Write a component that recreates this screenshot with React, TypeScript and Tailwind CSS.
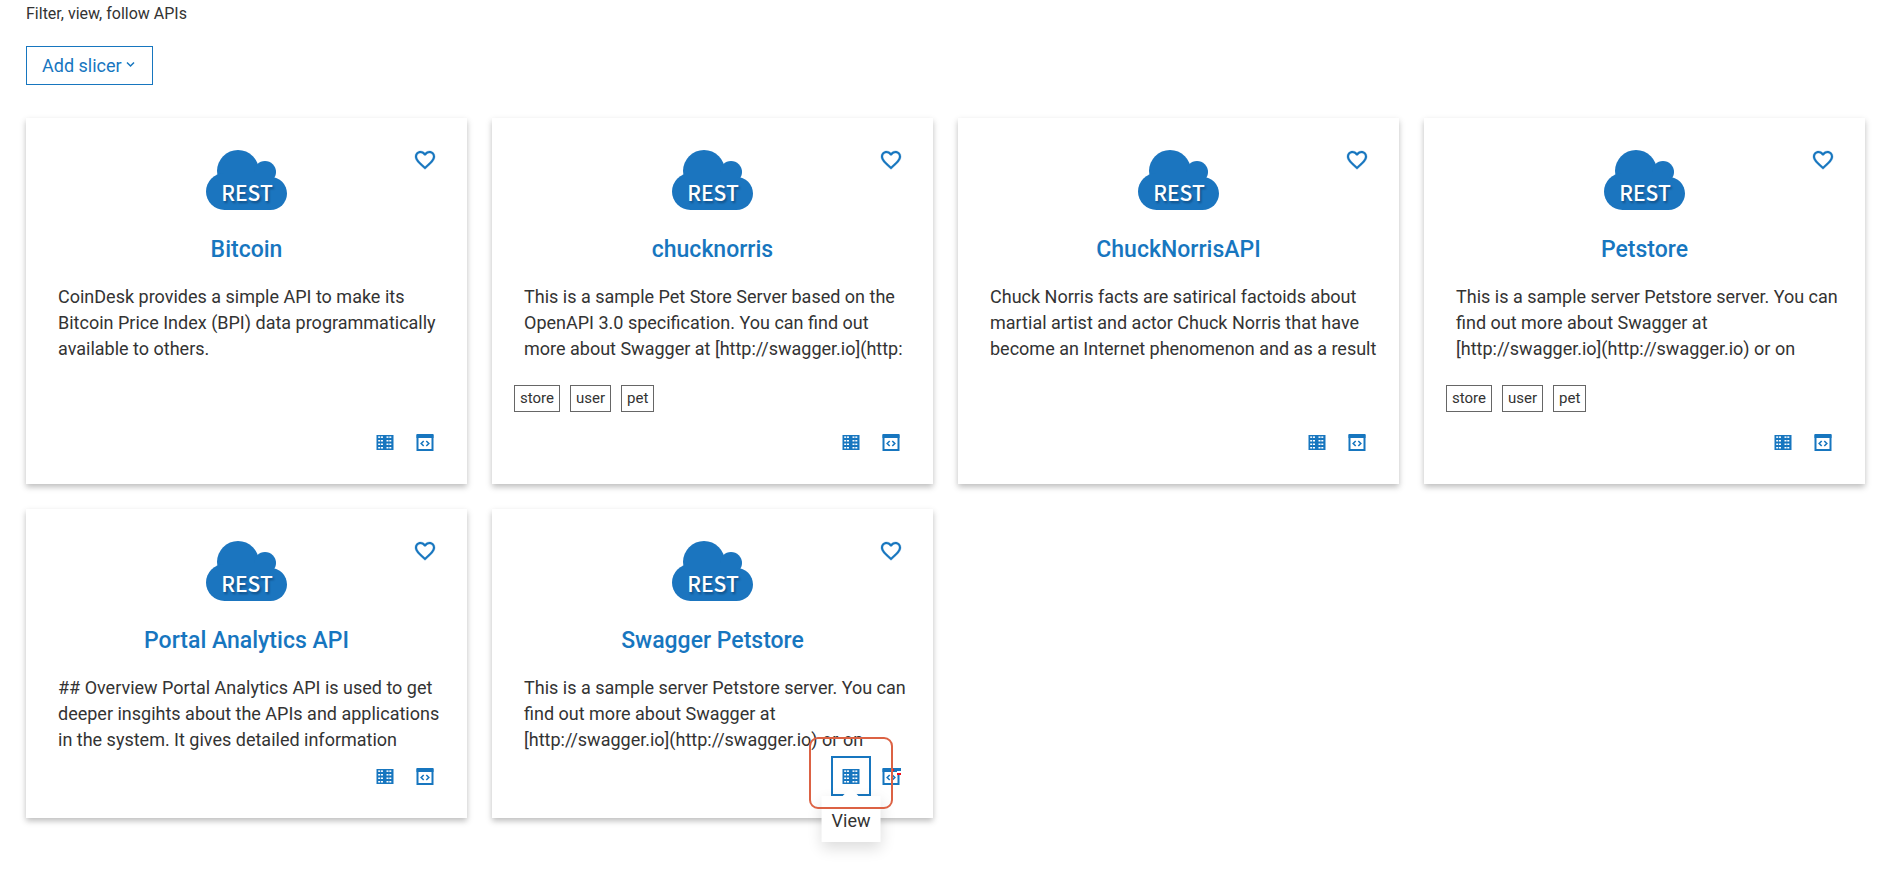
import React from "react";

type Api = { name: string; description: string; tags?: string[]; open?: boolean };

const apis: Api[] = [
  { name: "Bitcoin", description: "CoinDesk provides a simple API to make its\nBitcoin Price Index (BPI) data programmatically\navailable to others." },
  { name: "chucknorris", description: "This is a sample Pet Store Server based on the\nOpenAPI 3.0 specification. You can find out\nmore about Swagger at [http://swagger.io](http:", tags: ["store", "user", "pet"] },
  { name: "ChuckNorrisAPI", description: "Chuck Norris facts are satirical factoids about\nmartial artist and actor Chuck Norris that have\nbecome an Internet phenomenon and as a result" },
  { name: "Petstore", description: "This is a sample server Petstore server. You can\nfind out more about Swagger at\n[http://swagger.io](http://swagger.io) or on", tags: ["store", "user", "pet"] },
  { name: "Portal Analytics API", description: "## Overview Portal Analytics API is used to get\ndeeper insgihts about the APIs and applications\nin the system. It gives detailed information" },
  { name: "Swagger Petstore", description: "This is a sample server Petstore server. You can\nfind out more about Swagger at\n[http://swagger.io](http://swagger.io) or on", open: true },
];

function Cloud() {
  return (
    <svg className="h-[60px] w-[81px]" viewBox="0 0 81 60" role="img" aria-label="REST">
      <g fill="#1b75bf">
        <circle cx="32" cy="21" r="21" />
        <circle cx="59" cy="22" r="11" />
        <circle cx="18.500" cy="41.500" r="18.500" />
        <circle cx="64.500" cy="43.500" r="16.500" />
        <rect x="18" y="22" width="47" height="38" />
      </g>
      <g fontFamily="'Noto Sans CJK SC', sans-serif" fontSize="21" fontWeight="500" textAnchor="middle">
        <text x="42.500" y="52.500" fill="#08335c" opacity="0.6" className="blur-[1px]" aria-hidden="true">REST</text>
        <text x="41" y="51" fill="#fff">REST</text>
      </g>
    </svg>
  );
}

function Heart() {
  return (
    <svg className="h-6 w-6" viewBox="0 0 24 24" fill="currentColor" stroke="currentColor" strokeWidth="0.300" aria-hidden="true">
      <path d="M16.500 3c-1.740 0-3.410.81-4.500 2.090C10.910 3.810 9.240 3 7.500 3 4.420 3 2 5.420 2 8.500c0 3.780 3.400 6.860 8.550 11.540L12 21.350l1.450-1.320C18.600 15.360 22 12.280 22 8.500 22 5.420 19.580 3 16.500 3zm-4.400 15.550l-.1.100-.1-.1C7.140 14.240 4 11.390 4 8.500 4 6.500 5.500 5 7.500 5c1.540 0 3.040.99 3.570 2.360h1.870C13.460 5.990 14.960 5 16.500 5c2 0 3.500 1.500 3.500 3.500 0 2.890-3.140 5.740-7.900 10.050z" />
    </svg>
  );
}

function TableIcon() {
  return (
    <svg className="h-[18px] w-[18px]" viewBox="0 0 18 18" aria-hidden="true">
      <rect x="0.500" y="2" width="17" height="15" fill="#1776bf" />
      <g fill="#fff">
        {[3.4, 7, 10.500, 14].map((y) =>
          [2.200, 5, 10.500, 13.300].map((x) => <rect key={x + "-" + y} x={x} y={y} width="2" height="1.500" />)
        )}
      </g>
    </svg>
  );
}

function CodeIcon({ marked }: { marked?: boolean }) {
  return (
    <svg className="h-[18px] w-[18px] overflow-visible" viewBox="0 0 18 18" fill="none" stroke="#1776bf" aria-hidden="true">
      <path d="M0.500 1h17v4h-17z" fill="#1776bf" stroke="none" />
      <path d="M1.500 2v15h15V2" strokeWidth="2" />
      <path d="M7.700 8l-2.500 2.500 2.500 2.500M10.300 8l2.500 2.500-2.500 2.500" strokeWidth="1.600" />
      {marked && (
        <g stroke="none">
          <path d="M15 1h4v3h-4z" fill="#1776bf" />
          <path d="M15 4h4v2h-4z" fill="#fff" />
          <path d="M9 2h3v2H9zM15 6h4v2h-4z" fill="#f0101c" />
        </g>
      )}
    </svg>
  );
}

function Card({ api, compact }: { api: Api; compact: boolean }) {
  return (
    <article className="relative flex flex-col bg-white px-8 pt-8 shadow-[0_3px_6px_rgba(0,0,0,0.26)]">
      <button type="button" aria-label={"Follow " + api.name} className="absolute top-[30px] right-[30px] text-[#1776bf]">
        <Heart />
      </button>
      <div className="flex justify-center"><Cloud /></div>
      <h2 className="mt-6 text-center text-[23px] leading-8 font-medium text-[#1776bf]">{api.name}</h2>
      <p className="mt-[18px] text-lg leading-[26px] whitespace-pre">{api.description}</p>
      {!compact && (
        <ul className="mt-[23px] -ml-[10px] flex h-[27px] gap-[10px] text-[15px]">
          {api.tags?.map((t) => <li key={t} className="flex items-center border border-[#666] px-[5px]">{t}</li>)}
        </ul>
      )}
      <div className={compact ? "mt-[3px] -mr-[10px] mb-[22px] flex justify-end" : "mt-[10px] -mr-[10px] mb-[22px] flex justify-end"}>
        <div className="relative">
          <button type="button" aria-label="View" className={api.open ? "flex h-10 w-10 items-center justify-center border-2 border-[#1776bf]" : "flex h-10 w-10 items-center justify-center"}>
            <TableIcon />
          </button>
          {api.open && (
            <div role="tooltip" className="absolute top-10 left-1/2 z-10 -translate-x-1/2 bg-white px-[10px] pt-3 pb-2 text-lg leading-[26px] shadow-[0_6px_14px_rgba(0,0,0,0.14)]">
              <svg className="absolute bottom-full left-1/2 h-2 w-4 -translate-x-1/2" viewBox="0 0 16 8" aria-hidden="true"><path d="M0 8l8-8 8 8z" fill="#fff" /></svg>
              View
            </div>
          )}
        </div>
        <button type="button" aria-label={"Try " + api.name} className="flex h-10 w-10 items-center justify-center">
          <CodeIcon marked={api.open} />
        </button>
        {api.open && (
          <span className="pointer-events-none absolute right-10 bottom-[9px] z-20 h-[72px] w-[84px] rounded-[9px] border-2 border-[#dc6244]" />
        )}
      </div>
    </article>
  );
}

export default function App() {
  return (
    <main className="bg-white pr-[29px] pb-16 pl-[26px] font-[Roboto,sans-serif] text-[#333]">
      <p className="pt-[2px] text-base">Filter, view, follow APIs</p>
      <button type="button" className="mt-5 flex h-[39px] items-center gap-1 border border-[#1776bf] pr-[17px] pl-[15px] text-lg text-[#1776bf]">
        Add slicer
        <svg className="h-[9px] w-[9px]" viewBox="0 0 9 9" fill="none" stroke="currentColor" strokeWidth="1.500" aria-hidden="true"><path d="M1 1.500l3.500 3.500L8 1.500" /></svg>
      </button>
      <div className="mt-[33px] grid grid-cols-4 gap-[25px]">
        {apis.map((a, i) => <Card key={a.name} api={a} compact={i > 3} />)}
      </div>
    </main>
  );
}
